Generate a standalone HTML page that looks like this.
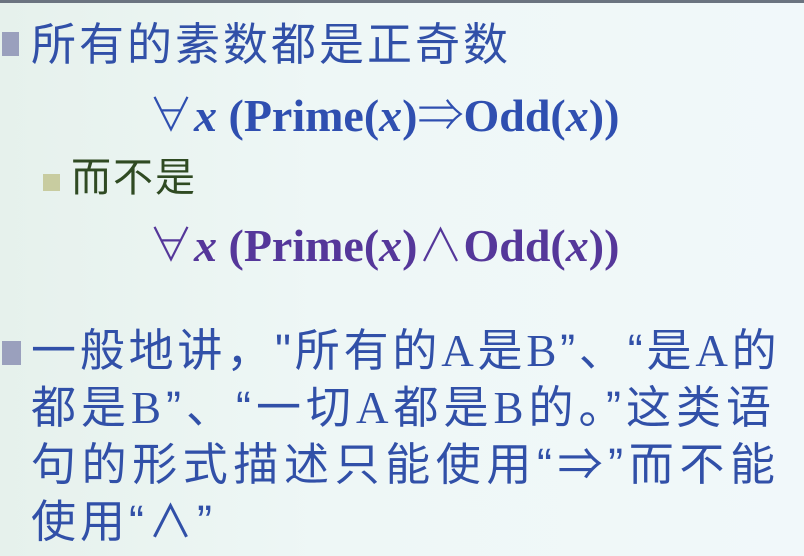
<!DOCTYPE html>
<html><head><meta charset="utf-8"><style>
html,body{margin:0;padding:0}
body{width:804px;height:556px;overflow:hidden;position:relative;
background:linear-gradient(90deg,#e6f1ec 0%,#eef7f6 40%,#f1f8fa 100%);
font-family:"Liberation Sans","Noto Sans CJK SC",sans-serif;}
.top{position:absolute;left:0;top:0;width:804px;height:3px;background:#6b7480}
.l{position:absolute;white-space:nowrap;line-height:1;color:#3150a8}
.sq{position:absolute;background:#9aa0bd}
.f{font-family:"Liberation Serif","Noto Serif CJK SC",serif;font-weight:bold;font-size:46px}
.f i{font-weight:bold}
.s{font-family:"Liberation Serif",serif}
</style></head><body>
<div class="top"></div>
<div class="sq" style="left:2px;top:32px;width:17px;height:24px"></div>
<div class="l" style="left:31px;top:22px;font-size:45px;letter-spacing:3px">所有的素数都是正奇数</div>
<div class="l f" style="left:148px;top:93px;color:#2f4fb0">∀<i>x</i> (Prime(<i>x</i>)⇒Odd(<i>x</i>))</div>
<div class="sq" style="left:43px;top:174px;width:17px;height:17px;background:#c8cca0"></div>
<div class="l" style="left:71px;top:158px;font-size:40px;letter-spacing:2px;color:#2f4a22">而不是</div>
<div class="l f" style="left:148px;top:223px;color:#55379a">∀<i>x</i> (Prime(<i>x</i>)∧Odd(<i>x</i>))</div>
<div class="sq" style="left:2px;top:341px;width:19px;height:24px"></div>
<div class="l" style="left:31px;top:328px;font-size:45px;letter-spacing:3.8px">一般地讲，"所有的<span class="s">A</span>是<span class="s">B</span>”、“是<span class="s">A</span>的</div>
<div class="l" style="left:31px;top:385px;font-size:45px;letter-spacing:5px">都是<span class="s">B</span>”、“一切<span class="s">A</span>都是<span class="s">B</span>的。”这类语</div>
<div class="l" style="left:31px;top:442px;font-size:45px;letter-spacing:5.6px">句的形式描述只能使用“⇒”而不能</div>
<div class="l" style="left:31px;top:499px;font-size:45px;letter-spacing:4px">使用“∧”</div>
</body></html>
